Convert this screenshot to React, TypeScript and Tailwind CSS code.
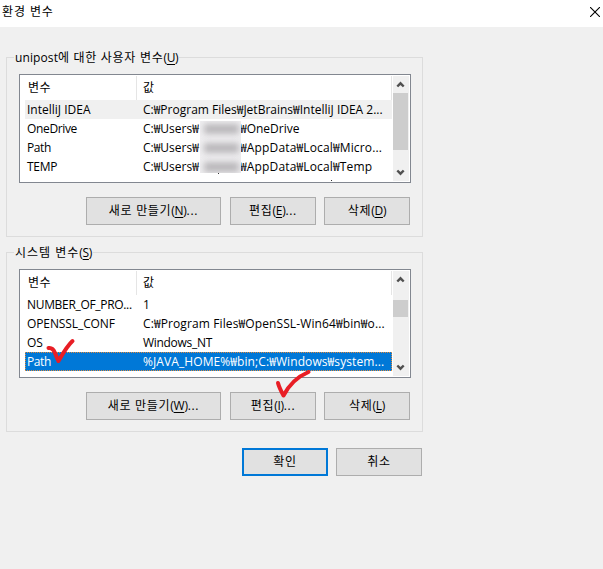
import clsx from "clsx";
import type { ReactNode } from "react";

type Variable = {
  name: string;
  nameClass?: string;
  value: string;
  // set when the user folder in the middle of the path is hidden
  rest?: string;
  valueClass?: string;
  restClass?: string;
  state?: "hover" | "selected";
};

const userVariables: Variable[] = [
  {
    name: "IntelliJ IDEA",
    value: "C:₩Program Files₩JetBrains₩IntelliJ IDEA 2...",
    state: "hover",
  },
  {
    name: "OneDrive",
    nameClass: "tracking-[-0.35px]",
    value: "C:₩Users₩",
    rest: "₩OneDrive",
  },
  {
    name: "Path",
    nameClass: "tracking-[-0.4px]",
    value: "C:₩Users₩",
    rest: "₩AppData₩Local₩Micro...",
    restClass: "tracking-[0.15px]",
  },
  {
    name: "TEMP",
    nameClass: "tracking-[-0.25px]",
    value: "C:₩Users₩",
    rest: "₩AppData₩Local₩Temp",
    restClass: "tracking-[0.15px]",
  },
];

const systemVariables: Variable[] = [
  { name: "NUMBER_OF_PRO...", nameClass: "tracking-[-0.32px]", value: "1" },
  {
    name: "OPENSSL_CONF",
    nameClass: "tracking-[-0.1px]",
    value: "C:₩Program Files₩OpenSSL-Win64₩bin₩o...",
    valueClass: "tracking-[0.11px]",
  },
  { name: "OS", value: "Windows_NT", valueClass: "tracking-[-0.3px]" },
  {
    name: "Path",
    nameClass: "tracking-[-0.4px]",
    value: "%JAVA_HOME%₩bin;C:₩Windows₩system...",
    valueClass: "tracking-[0.09px]",
    state: "selected",
  },
];

function Hotkey({ children }: { children: string }) {
  return (
    <span className="tracking-[-0.3px]">
      (<span className="underline underline-offset-2">{children}</span>)
    </span>
  );
}

function Button({
  className,
  primary,
  children,
}: {
  className?: string;
  primary?: boolean;
  children: ReactNode;
}) {
  return (
    <button
      type="button"
      className={clsx(
        "flex h-7 items-center justify-center bg-[#e1e1e1] tracking-[0.7px] whitespace-pre",
        primary ? "border-2 border-[#0078d7]" : "border border-[#adadad]",
        className ?? "w-[86px]",
      )}
    >
      <span>{children}</span>
    </button>
  );
}

function Chevron({ up }: { up?: boolean }) {
  return (
    <svg
      viewBox="0 0 16 17"
      className={clsx("h-[17px] w-4 shrink-0", up && "-scale-y-100")}
    >
      <path
        d="M4.3 6.5 7.5 9.700l3.200-3.200"
        fill="none"
        stroke="#505050"
        strokeWidth="2.4"
      />
    </svg>
  );
}

function Scrollbar({ thumb }: { thumb: string }) {
  return (
    <div className="mt-px mr-px mb-px ml-auto flex w-4 flex-col justify-between bg-[#f0f0f0]">
      <Chevron up />
      <div className="flex-1">
        <div className={clsx("w-[15px] bg-[#cdcdcd]", thumb)} />
      </div>
      <Chevron />
    </div>
  );
}

function Row({ item }: { item: Variable }) {
  return (
    <div
      className={clsx(
        "ml-[5px] flex h-[19px] w-[367px] items-center whitespace-pre",
        item.state === "hover" && "bg-[#f0f0f0]",
        item.state === "selected" &&
          "bg-[#0078d7] text-white outline-1 -outline-offset-1 outline-dotted outline-[#e08a3c]",
      )}
    >
      <span className={clsx("w-[116px] pl-0.5", item.nameClass)}>
        {item.name}
      </span>
      <span className={clsx("pl-0.5", item.rest && "w-[59px]", item.valueClass)}>
        {item.value}
      </span>
      {item.rest && (
        <span className={clsx("ml-[40px]", item.restClass)}>{item.rest}</span>
      )}
    </div>
  );
}

function VariableList({
  items,
  thumb,
  children,
}: {
  items: Variable[];
  thumb: string;
  children?: ReactNode;
}) {
  return (
    <div className="relative ml-3 flex h-[109px] w-[392px] border border-[#828790] bg-white">
      <div className="w-[372px]">
        <div className="flex h-[25px] pt-px tracking-[0.4px]">
          <span className="flex w-[117px] items-center border-r border-[#e5e5e5] pl-2">
            변수
          </span>
          <span className="flex w-[255px] items-center border-r border-[#e5e5e5] pl-1.5">
            값
          </span>
        </div>
        {items.map((item) => (
          <Row key={item.name} item={item} />
        ))}
      </div>
      <Scrollbar thumb={thumb} />
      {children}
    </div>
  );
}

function Group({ title, children }: { title: ReactNode; children: ReactNode }) {
  return (
    <section className="relative h-[180px] w-[417px] border border-[#dcdcdc] pt-4">
      <h2 className="absolute -top-2 left-[7px] bg-[#f0f0f0] px-px leading-4 tracking-[0.7px] whitespace-pre">
        {title}
      </h2>
      {children}
    </section>
  );
}

export default function App() {
  return (
    <main className="relative h-[569px] w-[603px] overflow-hidden bg-[#f0f0f0] font-['Open_Sans','Noto_Sans_CJK_KR',sans-serif] text-[12px] leading-4 text-black">
      <header className="flex h-[27px] items-center justify-between bg-white pr-[3px] pb-1 pl-0.5">
        <h1 className="tracking-[0.9px]">환경 변수</h1>
        <svg viewBox="0 0 10 10" className="size-2.5">
          <path d="M0 0 10 10M10 0 0 10" stroke="#000" strokeWidth="1.1" />
        </svg>
      </header>

      <div className="flex flex-col gap-[15px] pt-[30px] pl-1.5">
        <Group
          title={
            <>
              <span className="tracking-[0.1px]">unipost</span>에 대한 사용자
              {" 변수"}
              <Hotkey>U</Hotkey>
            </>
          }
        >
          <VariableList items={userVariables} thumb="h-[57px]">
            {/* redacted user folder */}
            <div className="absolute top-[46px] left-[180px] flex h-[52px] w-[41px] flex-col gap-[9px] overflow-hidden bg-[#f0eff1] pt-[3px]">
              <div className="ml-1 h-2.5 w-[35px] bg-[#b9b7ba] blur-[3px]" />
              <div className="ml-1 h-2.5 w-[35px] bg-[#b9b7ba] blur-[3px]" />
              <div className="ml-1 h-2.5 w-[35px] bg-[#b9b7ba] blur-[3px]" />
            </div>
            <span className="absolute top-[98px] left-[198px] size-px bg-[#333]" />
            <span className="absolute top-[105px] left-[311px] size-px bg-[#333]" />
          </VariableList>
          <div className="mt-3.5 ml-[79px] flex gap-[9px]">
            <Button className="w-[135px]">
              새로 만들기<Hotkey>N</Hotkey>...
            </Button>
            <Button>
              편집<Hotkey>E</Hotkey>...
            </Button>
            <Button className="-ml-px w-[86px]">
              삭제<Hotkey>D</Hotkey>
            </Button>
          </div>
        </Group>

        <Group
          title={
            <>
              <span className="tracking-[1px]">시스템 변수</span>
              <Hotkey>S</Hotkey>
            </>
          }
        >
          <VariableList items={systemVariables} thumb="mt-[12px] h-[17px]" />
          <div className="mt-3.5 ml-[79px] flex gap-[9px]">
            <Button className="w-[135px]">
              새로 만들기<Hotkey>W</Hotkey>...
            </Button>
            <Button>
              편집<Hotkey>I</Hotkey>...
            </Button>
            <Button className="-ml-px w-[86px]">
              삭제<Hotkey>L</Hotkey>
            </Button>
          </div>
        </Group>
      </div>

      <div className="mt-4 ml-[242px] flex gap-2">
        <Button primary>확인</Button>
        <Button>취소</Button>
      </div>

      {/* hand-drawn check marks */}
      <svg
        viewBox="0 0 32 28"
        className="absolute top-[337px] left-[45px] h-7 w-8"
        fill="none"
        stroke="#e81e25"
        strokeWidth="4"
        strokeLinecap="round"
        strokeLinejoin="round"
      >
        <path d="M3.500 11c3-.5 5 1 6.500 5 1.200 3 2 5 3.500 8C17 18 22 9 27.500 4" />
      </svg>
      <svg
        viewBox="0 0 40 32"
        className="absolute top-[368px] left-[273px] h-8 w-10"
        fill="none"
        stroke="#e81e25"
        strokeWidth="4"
        strokeLinecap="round"
        strokeLinejoin="round"
      >
        <path d="M5 15c1 4 3 8 5.500 12.500C16 17 25 8.500 35.500 4" />
      </svg>
    </main>
  );
}
